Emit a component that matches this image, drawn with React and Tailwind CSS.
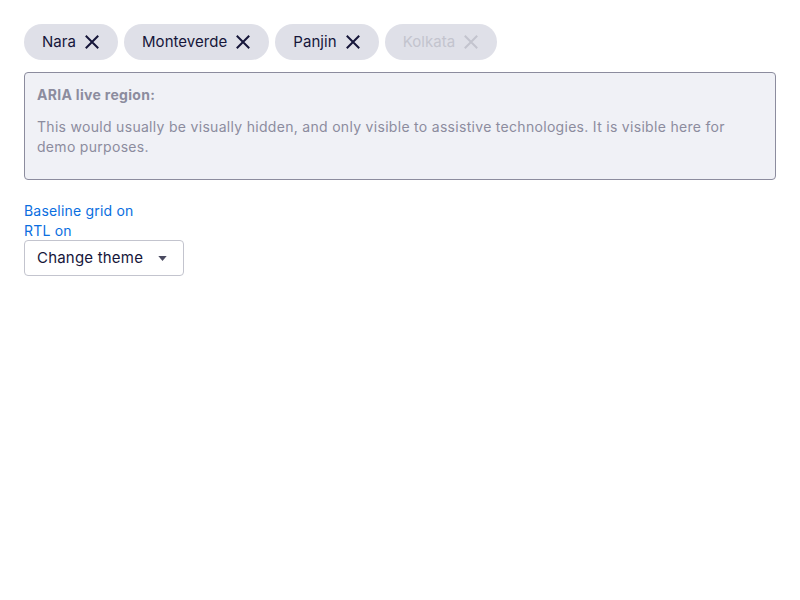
import React from 'react';

const chips = [
  { label: 'Nara' },
  { label: 'Monteverde' },
  { label: 'Panjin' },
  { label: 'Kolkata', disabled: true },
];

function XIcon({ className }) {
  return (
    <svg viewBox="0 0 16 16" className={className} fill="none" stroke="currentColor" strokeWidth="2" strokeLinecap="square">
      <path d="M2.5 2.5l11 11M13.5 2.5l-11 11" />
    </svg>
  );
}

export default function App() {
  return (
    <div className="min-h-screen bg-white p-6 font-['Inter',sans-serif] text-[#16163a]">
      {/* Chips */}
      <div className="flex gap-1.5">
        {chips.map((c) => (
          <div
            key={c.label}
            className={`flex h-9 items-center gap-2 rounded-full bg-[#dfe0e8] pl-[18px] pr-[18px] text-[15px] tracking-[0.05px] ${c.disabled ? 'text-[#c3c4ce]' : 'text-[#16163a]'}`}
          >
            <span>{c.label}</span>
            <XIcon className="h-4 w-4" />
          </div>
        ))}
      </div>

      {/* Live region */}
      <div className="mt-3 h-[108px] rounded border border-[#8c8c9e] bg-[#f0f1f6] px-3 pt-3 text-sm tracking-[0.3px] text-[#8c8c9e]">
        <p className="font-bold leading-5">ARIA live region:</p>
        <p className="mt-3 leading-5">
          This would usually be visually hidden, and only visible to assistive technologies. It is visible here for demo purposes.
        </p>
      </div>

      <div className="mt-5 flex flex-col items-start pt-px text-sm leading-5 tracking-[0.2px] text-[#0a6ee0]">
        <a href="#">Baseline grid on</a>
        <a href="#">RTL on</a>
      </div>
      <button className="-mt-px flex h-9 w-40 items-center justify-between rounded border border-[#c3c4ce] bg-white pl-3 pr-4 text-[15px] tracking-[0.2px] text-[#16163a]">
        <span>Change theme</span>
        <svg viewBox="0 0 10 6" className="h-[5px] w-[9px] text-[#4a4a60]" fill="currentColor">
          <path d="M0 0h10L5 6z" />
        </svg>
      </button>
    </div>
  );
}
